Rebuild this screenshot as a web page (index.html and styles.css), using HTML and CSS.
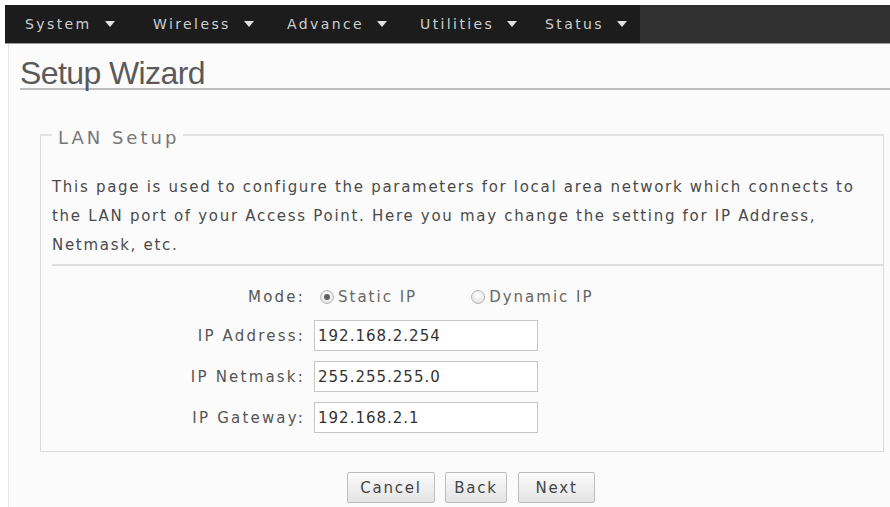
FILE: index.html
```html
<!DOCTYPE html>
<html>
<head>
<meta charset="utf-8">
<link rel="stylesheet" href="styles.css">
</head>
<body>
<div class="nav">
  <ul class="menu">
    <li>System<span class="caret"></span></li>
    <li>Wireless<span class="caret"></span></li>
    <li>Advance<span class="caret"></span></li>
    <li>Utilities<span class="caret"></span></li>
    <li>Status<span class="caret"></span></li>
  </ul>
</div>
<div class="content">
  <h1 class="title">Setup Wizard</h1>
  <fieldset class="box">
    <legend class="legend">LAN Setup</legend>
    <p class="desc">This page is used to configure the parameters for local area network which connects to<br>the LAN port of your Access Point. Here you may change the setting for IP Address,<br>Netmask, etc.</p>
    <div class="sep"></div>
    <div class="form">
      <div class="row mode">
        <span class="label">Mode:</span>
        <span class="opts">
          <span class="opt"><span class="radio on"></span>Static IP</span>
          <span class="opt opt2"><span class="radio"></span>Dynamic IP</span>
        </span>
      </div>
      <div class="row">
        <span class="label">IP Address:</span>
        <span class="input">192.168.2.254</span>
      </div>
      <div class="row">
        <span class="label">IP Netmask:</span>
        <span class="input">255.255.255.0</span>
      </div>
      <div class="row">
        <span class="label">IP Gateway:</span>
        <span class="input">192.168.2.1</span>
      </div>
    </div>
  </fieldset>
  <div class="buttons">
    <span class="btn btn-cancel">Cancel</span>
    <span class="btn btn-back">Back</span>
    <span class="btn btn-next">Next</span>
  </div>
</div>
</body>
</html>
```
FILE: styles.css
```css
html, body {
  margin: 0;
  padding: 0;
  background: #ffffff;
  font-family: "DejaVu Sans", Verdana, sans-serif;
  overflow: hidden;
}
.nav {
  margin: 5px 0 0 5px;
  height: 38px;
  background: #303030;
  border-bottom: 1px solid #9a9a9a;
}
.menu {
  list-style: none;
  margin: 0;
  padding: 0 0 0 20px;
  width: 615px;
  height: 38px;
  background: #1c1c1c;
  display: grid;
  grid-template-columns: 128px 134px 133px 125px auto;
  align-items: center;
}
.menu li {
  color: #cfcfcf;
  font-size: 14px;
  letter-spacing: 2.4px;
  white-space: nowrap;
  display: flex;
  align-items: center;
}
.caret {
  display: inline-block;
  width: 0;
  height: 0;
  border-left: 5px solid transparent;
  border-right: 5px solid transparent;
  border-top: 6px solid #e2e2e2;
  margin-left: 13px;
}
.content {
  margin-left: 8px;
  border-left: 1px solid #e6e6e6;
  background: #fbfbfb;
  height: 470px;
  padding-top: 1px;
}
.title {
  margin: 13px 0 0 11px;
  font-family: "Liberation Sans", Arial, sans-serif;
  font-weight: normal;
  font-size: 32px;
  letter-spacing: -0.6px;
  line-height: 30px;
  color: #5a5a5a;
  border-bottom: 2px solid #bdbdbd;
}
.box {
  margin: 30px 6px 0 31px;
  padding: 0 0 18px 11px;
  border: 1px solid #dcdcdc;
  border-top: 2px solid #e2e2e2;
  min-width: 0;
}
.legend {
  margin: 0;
  padding: 7px 4px 0 6px;
  font-size: 18px;
  line-height: 22px;
  letter-spacing: 3px;
  color: #777;
}
.desc {
  margin: 24px 0 0 0;
  font-size: 15px;
  line-height: 29px;
  letter-spacing: 1.7px;
  color: #4a4a4a;
  white-space: nowrap;
}
.sep {
  height: 2px;
  background: #dedede;
  margin: 4px 0 0 0;
}
.form {
  display: flex;
  flex-direction: column;
  gap: 10px;
  padding-top: 19px;
}
.row {
  display: flex;
  align-items: center;
  height: 31px;
  font-size: 15px;
  letter-spacing: 2.2px;
  color: #555;
}
.row.mode { height: 24px; margin-bottom: 1px; }
.label {
  width: 253px;
  text-align: right;
  margin-right: 9px;
  color: #555;
  white-space: nowrap;
}
.opts {
  display: flex;
  align-items: center;
  padding-left: 6px;
}
.opt {
  display: flex;
  align-items: center;
  color: #666;
  white-space: nowrap;
  letter-spacing: 2px;
}
.opt2 { margin-left: 54px; }
.radio {
  width: 14px;
  height: 14px;
  border-radius: 50%;
  border: 1px solid #b5b5b5;
  background: radial-gradient(circle at 50% 40%, #ffffff, #dcdcdc);
  margin-right: 4px;
  box-sizing: border-box;
  position: relative;
}
.radio.on::after {
  content: "";
  position: absolute;
  left: 3px;
  top: 3px;
  width: 6px;
  height: 6px;
  border-radius: 50%;
  background: #606060;
}
.input {
  width: 224px;
  height: 31px;
  box-sizing: border-box;
  border: 1px solid #c6c6c6;
  background: #fff;
  padding: 0 3px;
  display: flex;
  align-items: center;
  color: #333;
  letter-spacing: 1px;
}
.buttons {
  display: flex;
  gap: 10px;
  margin: 20px 0 0 338px;
}
.btn {
  height: 31px;
  box-sizing: border-box;
  border: 1px solid #bdbdbd;
  border-radius: 2px;
  background: linear-gradient(#fbfbfb, #e4e4e4);
  font-size: 15px;
  letter-spacing: 1.8px;
  color: #444;
  display: flex;
  align-items: center;
  justify-content: center;
}
.btn-cancel { width: 88px; }
.btn-back { width: 62px; margin-right: 1px; }
.btn-next { width: 77px; }
```
